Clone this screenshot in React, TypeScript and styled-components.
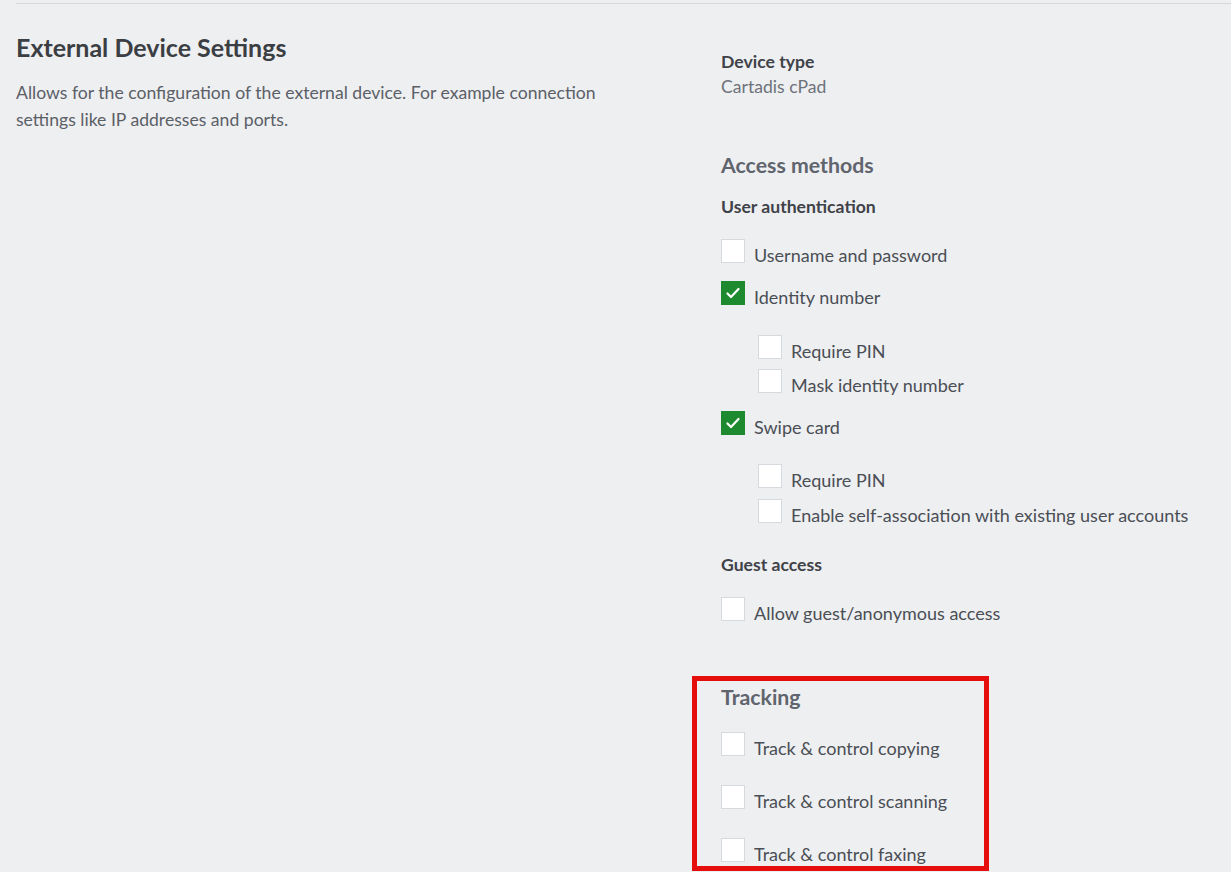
import React from 'react';
import styled, { createGlobalStyle } from 'styled-components';

const GlobalStyle = createGlobalStyle`
  html, body {
    margin: 0;
    padding: 0;
    background: #eeeff1;
    overflow: hidden;
  }
  body {
    font-family: Lato, 'Open Sans', sans-serif;
    color: #4a4e55;
  }
`;

const Page = styled.div`
  padding-top: 3px;
  min-height: 869px;
`;

const Panel = styled.section`
  margin-left: 16px;
  border-top: 1px solid #d5d7da;
  display: grid;
  grid-template-columns: 705px 1fr;
`;

const Intro = styled.div`
  padding-top: 29px;
`;

const Title = styled.h2`
  margin: 0;
  font-size: 25px;
  font-weight: 700;
  color: #3b3e43;
  line-height: 28px;
`;

const Description = styled.p`
  margin: 18px 0 0;
  font-size: 17.6px;
  line-height: 27px;
  color: #5b6067;
  max-width: 600px;
`;

const Fields = styled.div`
  padding-top: 46px;
  display: flex;
  flex-direction: column;
`;

const Label = styled.div<{ $gap?: number }>`
  font-size: 17.6px;
  font-weight: 700;
  color: #3f4248;
  line-height: 24px;
  margin-top: ${(p) => p.$gap ?? 0}px;
`;

const Value = styled.div`
  font-size: 17.6px;
  color: #6d727a;
  line-height: 26px;
`;

const Heading = styled.h3<{ $gap: number }>`
  margin: ${(p) => p.$gap}px 0 0;
  font-size: 21.3px;
  font-weight: 700;
  color: #5f646d;
  line-height: 28px;
`;

const Row = styled.label<{ $gap: number; $nested?: boolean }>`
  display: flex;
  align-items: center;
  gap: 9px;
  margin-top: ${(p) => p.$gap}px;
  margin-left: ${(p) => (p.$nested ? 37 : 0)}px;
  font-size: 18px;
  line-height: 24px;
  color: #4a4e55;
  cursor: pointer;
`;

const Box = styled.span<{ $checked?: boolean }>`
  box-sizing: border-box;
  width: 24px;
  height: 24px;
  flex: none;
  display: flex;
  align-items: center;
  justify-content: center;
  background: ${(p) => (p.$checked ? '#1e8a30' : '#ffffff')};
  border: 1px solid ${(p) => (p.$checked ? '#1e8a30' : '#d6dade')};
`;

const Text = styled.span`
  transform: translateY(4px);
`;

const Tracked = styled.div`
  position: relative;
  display: flex;
  flex-direction: column;
  margin-top: 62px;
`;

const Highlight = styled.div`
  position: absolute;
  left: -29px;
  top: -7px;
  width: 297px;
  height: 195px;
  box-sizing: border-box;
  border: 5px solid #e60d0d;
  pointer-events: none;
`;

type CheckProps = {
  label: string;
  checked?: boolean;
  nested?: boolean;
  gap: number;
};

const Check = ({ label, checked, nested, gap }: CheckProps) => (
  <Row $gap={gap} $nested={nested}>
    <Box $checked={checked}>
      {checked && (
        <svg width="16" height="14" viewBox="0 0 16 14">
          <path
            d="M2.5 7.5 L6 11 L13.5 3"
            fill="none"
            stroke="#ffffff"
            strokeWidth="2.2"
            strokeLinecap="round"
            strokeLinejoin="round"
          />
        </svg>
      )}
    </Box>
    <Text>{label}</Text>
  </Row>
);

export default function App() {
  return (
    <Page>
      <GlobalStyle />
      <Panel>
        <Intro>
          <Title>External Device Settings</Title>
          <Description>
            Allows for the configuration of the external device. For example connection
            settings like IP addresses and ports.
          </Description>
        </Intro>
        <Fields>
          <Label>Device type</Label>
          <Value>Cartadis cPad</Value>

          <Heading $gap={51}>Access methods</Heading>
          <Label $gap={16}>User authentication</Label>
          <Check gap={20} label="Username and password" />
          <Check gap={18} label="Identity number" checked />
          <Check gap={30} label="Require PIN" nested />
          <Check gap={10} label="Mask identity number" nested />
          <Check gap={18} label="Swipe card" checked />
          <Check gap={29} label="Require PIN" nested />
          <Check gap={11} label="Enable self-association with existing user accounts" nested />

          <Label $gap={30}>Guest access</Label>
          <Check gap={20} label="Allow guest/anonymous access" />

          <Tracked>
            <Highlight />
            <Heading $gap={0}>Tracking</Heading>
            <Check gap={21} label="Track & control copying" />
            <Check gap={29} label="Track & control scanning" />
            <Check gap={29} label="Track & control faxing" />
          </Tracked>
        </Fields>
      </Panel>
    </Page>
  );
}
